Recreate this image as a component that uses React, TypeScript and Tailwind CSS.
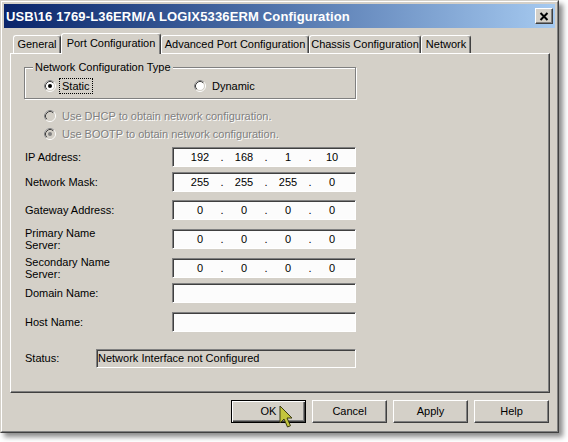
import { Fragment } from 'react'

function Radio({ checked = false, disabled = false }: { checked?: boolean; disabled?: boolean }) {
  return (
    <svg width="12" height="12" viewBox="0 0 12 12" className="shrink-0">
      <circle cx="6" cy="6" r="5.5" fill="none" stroke="#fff" />
      <path d="M2.11 9.89A5.5 5.5 0 0 1 9.89 2.11" fill="none" stroke="#808080" />
      <circle cx="6" cy="6" r="4.5" fill={disabled ? '#d4d0c8' : '#fff'} stroke="#d4d0c8" />
      <path d="M2.82 9.18A4.5 4.5 0 0 1 9.18 2.82" fill="none" stroke="#404040" />
      {checked && <circle cx="6" cy="6" r="2" fill={disabled ? '#808080' : '#000'} />}
    </svg>
  )
}

function IpField({ octets }: { octets: string[] }) {
  return (
    <div className="flex h-[20px] w-[184px] items-center border border-[#808080] border-r-white border-b-white bg-[#fcfcfc] pl-[9px] shadow-[inset_1px_1px_0_#404040]">
      {octets.map((o, i) => (
        <Fragment key={i}>
          <span className="w-[36px] text-center">{o}</span>
          {i < 3 && <span className="w-[8px] text-center">.</span>}
        </Fragment>
      ))}
    </div>
  )
}

function TextField() {
  return (
    <div className="h-[20px] w-[184px] border border-[#808080] border-r-white border-b-white bg-[#fcfcfc] shadow-[inset_1px_1px_0_#404040]" />
  )
}

function Tab({ label, width, selected }: { label: string; width: string; selected?: boolean }) {
  return (
    <div
      className={`flex items-center justify-center rounded-t-[3px] border border-b-0 border-white border-r-[#404040] bg-[#d4d0c8] shadow-[inset_-1px_0_0_#808080] ${width} ${
        selected ? 'relative z-10 -mb-px h-[21px] pb-[2px]' : 'h-[18px]'
      }`}
    >
      {label}
    </div>
  )
}

function Button({ label, isDefault }: { label: string; isDefault?: boolean }) {
  return (
    <button
      className={`h-[23px] w-[75px] bg-[#d4d0c8] text-black ${
        isDefault
          ? 'border border-black shadow-[inset_1px_1px_0_#fff,inset_-1px_-1px_0_#404040,inset_-2px_-2px_0_#808080]'
          : 'border border-white border-r-[#404040] border-b-[#404040] shadow-[inset_-1px_-1px_0_#808080]'
      }`}
    >
      {label}
    </button>
  )
}

const ROWS: { label: string[]; octets?: string[]; mt: string }[] = [
  { label: ['IP Address:'], octets: ['192', '168', '1', '10'], mt: 'mt-[5px]' },
  { label: ['Network Mask:'], octets: ['255', '255', '255', '0'], mt: 'mt-[5px]' },
  { label: ['Gateway Address:'], octets: ['0', '0', '0', '0'], mt: 'mt-[8px]' },
  { label: ['Primary Name', 'Server:'], octets: ['0', '0', '0', '0'], mt: 'mt-[7px]' },
  { label: ['Secondary Name', 'Server:'], octets: ['0', '0', '0', '0'], mt: 'mt-[9px]' },
  { label: ['Domain Name:'], mt: 'mt-[7px]' },
  { label: ['Host Name:'], mt: 'mt-[9px]' },
]

export default function App() {
  return (
    <div className="h-[442px] w-[568px] overflow-hidden bg-white font-['Liberation_Sans',Arial,sans-serif] text-[11px] leading-[13px] text-black">
      <div className="relative h-[433px] w-[559px] border border-[#d4d0c8] border-r-[#404040] border-b-[#404040] bg-[#d4d0c8] shadow-[4px_4px_5px_rgba(0,0,0,0.45)]">
        <div className="flex h-full flex-col border border-white border-r-[#808080] border-b-[#808080] p-[2px]">
          {/* title bar */}
          <div className="flex h-[24px] shrink-0 items-center justify-between bg-gradient-to-r from-[#0a246a] to-[#a6caf0] pl-[2px] pr-[2px]">
            <span className="text-[13px] font-bold tracking-[0.15px] text-white">
              USB\16 1769-L36ERM/A LOGIX5336ERM Configuration
            </span>
            <div className="flex h-[16px] w-[18px] items-center justify-center border border-white border-r-[#404040] border-b-[#404040] bg-[#d4d0c8] shadow-[inset_-1px_-1px_0_#808080]">
              <svg width="10" height="9" viewBox="0 0 10 9">
                <path d="M1.5 1l7 7M8.5 1l-7 7" stroke="#000" strokeWidth="2" />
              </svg>
            </div>
          </div>

          <div className="ml-[6px] mr-[5px] flex flex-col">
            {/* tabs */}
            <div className="mt-[5px] flex h-[20px] items-end pl-[3px]">
              <Tab label="General" width="w-[48px]" />
              <Tab label="Port Configuration" width="w-[100px]" selected />
              <Tab label="Advanced Port Configuration" width="w-[148px]" />
              <Tab label="Chassis Configuration" width="w-[112px]" />
              <Tab label="Network" width="w-[50px]" />
            </div>

            {/* panel */}
            <div className="flex h-[340px] flex-col border border-white border-r-[#404040] border-b-[#404040] pl-[13px] shadow-[inset_-1px_-1px_0_#808080]">
              <fieldset className="mt-[7px] h-[38px] w-[332px] border border-[#808080] shadow-[1px_1px_0_#fff,inset_1px_1px_0_#fff]">
                <legend className="ml-[8px] bg-[#d4d0c8] px-[2px]">Network Configuration Type</legend>
                <div className="mt-[4px] flex h-[16px] items-center pl-[19px]">
                  <div className="flex w-[150px] items-center gap-[3px]">
                    <Radio checked />
                    <span className="border border-dotted border-black px-[2px] leading-[14px]">Static</span>
                  </div>
                  <div className="flex items-center gap-[6px]">
                    <Radio />
                    <span>Dynamic</span>
                  </div>
                </div>
              </fieldset>

              <div className="mt-[9px] flex h-[16px] items-center gap-[6px] pl-[20px] text-[#808080] [text-shadow:1px_1px_0_#fff]">
                <Radio disabled />
                <span>Use DHCP to obtain network configuration.</span>
              </div>
              <div className="mt-[2px] flex h-[16px] items-center gap-[6px] pl-[20px] text-[#808080] [text-shadow:1px_1px_0_#fff]">
                <Radio checked disabled />
                <span>Use BOOTP to obtain network configuration.</span>
              </div>

              {ROWS.map((r) => (
                <div key={r.label[0]} className={`grid h-[20px] grid-cols-[148px_184px] items-center ${r.mt}`}>
                  <div className="flex flex-col pl-px leading-[12px]">
                    {r.label.map((l) => (
                      <span key={l}>{l}</span>
                    ))}
                  </div>
                  {r.octets ? <IpField octets={r.octets} /> : <TextField />}
                </div>
              ))}

              <div className="mt-[17px] grid grid-cols-[72px_260px] items-center">
                <span className="pl-px">Status:</span>
                <div className="flex h-[19px] items-center border border-[#808080] border-r-white border-b-white bg-[#d4d0c8] pl-[1px] shadow-[inset_1px_1px_0_#404040]">
                  Network Interface not Configured
                </div>
              </div>
            </div>

            {/* buttons */}
            <div className="mt-[7px] flex justify-end gap-[6px] pr-px">
              <Button label="OK" isDefault />
              <Button label="Cancel" />
              <Button label="Apply" />
              <Button label="Help" />
            </div>
          </div>
        </div>

        {/* mouse pointer */}
        <svg className="absolute left-[278px] top-[404px]" width="14" height="24" viewBox="0 0 14 24">
          <path
            d="M1 1v17l4-4 3.5 8 3-1.3-3.5-7.7H13z"
            fill="#c3c53c"
            stroke="#3c3c10"
            strokeWidth="1"
            strokeLinejoin="round"
          />
        </svg>
      </div>
    </div>
  )
}
